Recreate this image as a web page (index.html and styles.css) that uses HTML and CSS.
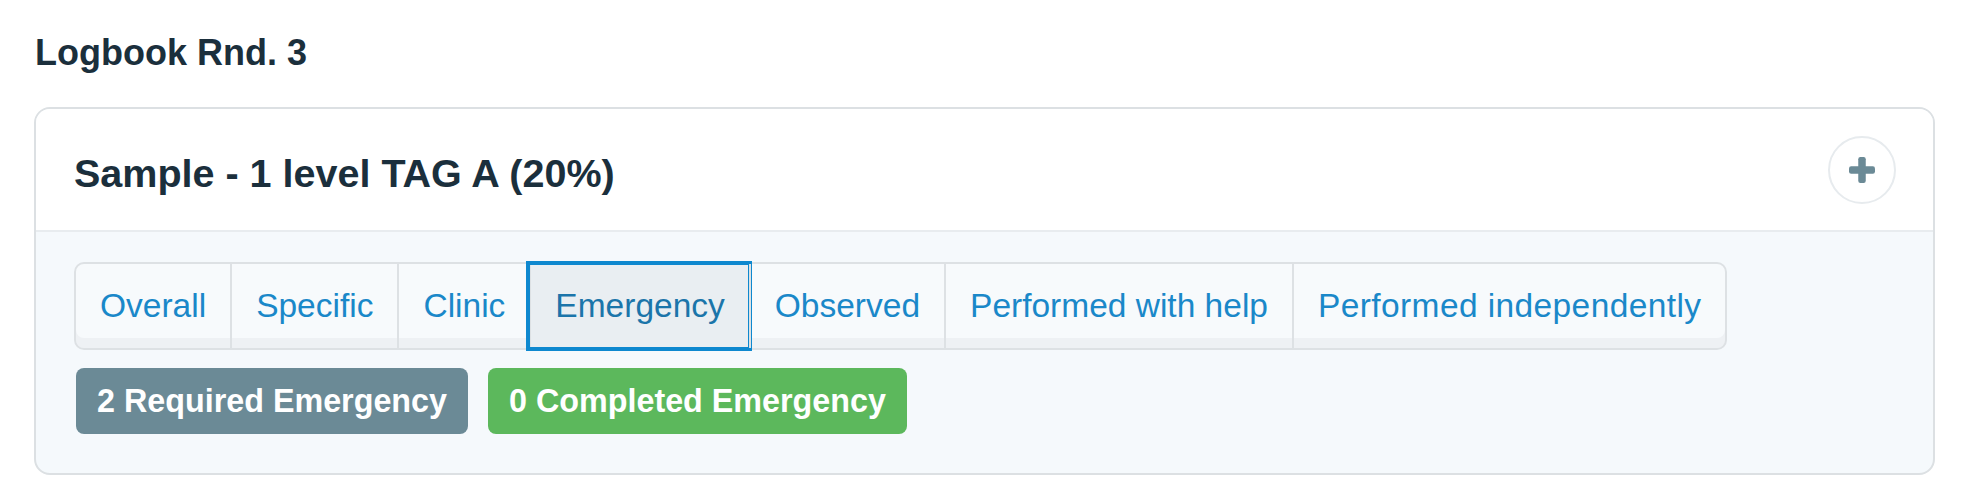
FILE: index.html
```html
<!DOCTYPE html>
<html lang="en">
<head>
<meta charset="utf-8">
<title>Logbook</title>
<link rel="stylesheet" href="styles.css">
</head>
<body>
<div class="page">
  <h1 class="page-title">Logbook Rnd. 3</h1>
  <section class="card">
    <header class="card-header">
      <h2 class="card-title">Sample - 1 level TAG A (20%)</h2>
      <button class="add-btn" type="button" aria-label="Add">
        <svg width="26" height="26" viewBox="0 0 26 26" aria-hidden="true">
          <rect x="9.25" y="0" width="7.5" height="26" rx="2.2" fill="#6b8a96"/>
          <rect x="0" y="9.25" width="26" height="7.5" rx="2.2" fill="#6b8a96"/>
        </svg>
      </button>
    </header>
    <div class="card-body">
      <nav class="tabs">
        <a class="tab">Overall</a>
        <a class="tab">Specific</a>
        <a class="tab">Clinic</a>
        <a class="tab active">Emergency</a>
        <a class="tab">Observed</a>
        <a class="tab">Performed with help</a>
        <a class="tab">Performed independently</a>
      </nav>
      <div class="badges">
        <span class="badge badge-required">2 Required Emergency</span>
        <span class="badge badge-completed">0 Completed Emergency</span>
      </div>
    </div>
  </section>
</div>
</body>
</html>
```
FILE: styles.css
```css
html, body {
  margin: 0;
  padding: 0;
  background: #ffffff;
}

body {
  font-family: "Liberation Sans", Arial, Helvetica, sans-serif;
  color: #1b2f3c;
}

.page {
  padding: 33px 31px 0 34px;
}

.page-title {
  margin: 0 0 34px 1px;
  font-size: 36px;
  line-height: 40px;
  font-weight: 700;
  color: #1b2f3c;
}

.card {
  border: 2px solid #dce0e3;
  border-radius: 16px;
  overflow: hidden;
  background: #f5f9fc;
}

.card-header {
  height: 121px;
  background: #ffffff;
  border-bottom: 2px solid #e8ecef;
  display: flex;
  align-items: center;
  justify-content: space-between;
  padding: 0 37px 0 38px;
}

.card-title {
  margin: 0;
  padding-top: 6px;
  font-size: 39.5px;
  line-height: 44px;
  font-weight: 700;
  color: #1b2f3c;
}

.add-btn {
  width: 68px;
  height: 68px;
  border-radius: 50%;
  border: 2px solid #e7ebee;
  background: #ffffff;
  padding: 0;
  display: flex;
  align-items: center;
  justify-content: center;
}

.card-body {
  padding: 30px 38px 39px 38px;
  display: flex;
  flex-direction: column;
  align-items: flex-start;
  gap: 18px;
}

.tabs {
  display: flex;
  border: 2px solid #dde1e4;
  border-radius: 10px;
  background: #f7fafc;
  box-shadow: inset 0 -10px 0 #eef1f4;
}

.tab {
  padding: 0 24px;
  height: 84px;
  line-height: 84px;
  font-size: 33.5px;
  color: #1a88c9;
  white-space: nowrap;
}

.tab:last-child {
  letter-spacing: 0.4px;
}

.tab + .tab {
  border-left: 2px solid #dde1e4;
}

.tab.active {
  background: #e9eef2;
  color: #1b75aa;
  outline: 4px solid #0e88cf;
  outline-offset: -1px;
}

.badges {
  display: flex;
  gap: 20px;
  margin-left: 2px;
}

.badge {
  height: 66px;
  line-height: 66px;
  padding: 0 21px;
  border-radius: 8px;
  font-size: 32.3px;
  font-weight: 700;
  color: #ffffff;
  white-space: nowrap;
}

.badge-required {
  background: #6b8a96;
}

.badge-completed {
  background: #5cb85c;
}
```
